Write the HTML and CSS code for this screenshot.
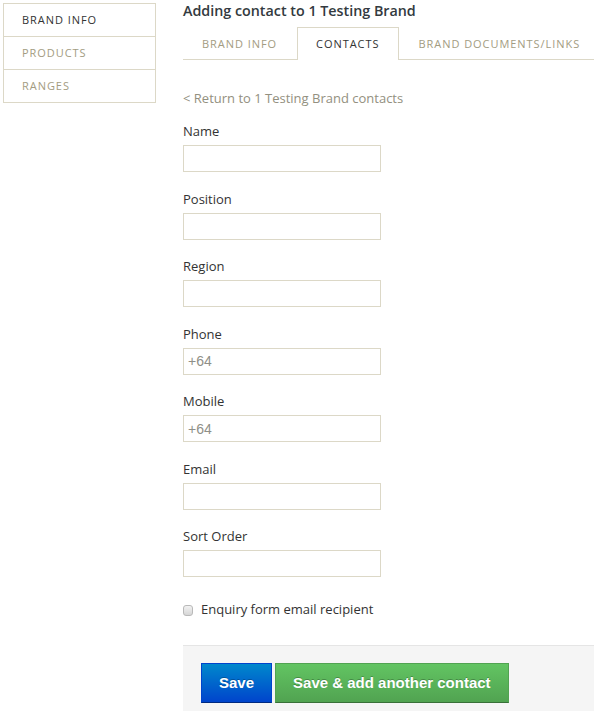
FILE: index.html
```html
<!DOCTYPE html>
<html>
<head>
<meta charset="utf-8">
<link rel="stylesheet" href="styles.css">
</head>
<body>
<div class="page">
  <nav class="sidebar">
    <a class="side-item active">BRAND INFO</a>
    <a class="side-item">PRODUCTS</a>
    <a class="side-item">RANGES</a>
  </nav>
  <main class="main">
    <h1 class="title">Adding contact to 1 Testing Brand</h1>
    <div class="tabs">
      <a class="tab">BRAND INFO</a>
      <a class="tab active">CONTACTS</a>
      <a class="tab">BRAND DOCUMENTS/LINKS</a>
    </div>
    <a class="back">&lt; Return to 1 Testing Brand contacts</a>
    <form class="form">
      <div class="group"><label class="label">Name</label><input class="field" type="text"></div>
      <div class="group"><label class="label">Position</label><input class="field" type="text"></div>
      <div class="group"><label class="label">Region</label><input class="field" type="text"></div>
      <div class="group"><label class="label">Phone</label><input class="field" type="text" value="+64"></div>
      <div class="group"><label class="label">Mobile</label><input class="field" type="text" value="+64"></div>
      <div class="group"><label class="label">Email</label><input class="field" type="text"></div>
      <div class="group"><label class="label">Sort Order</label><input class="field" type="text"></div>
      <label class="check"><input class="box" type="checkbox"><span>Enquiry form email recipient</span></label>
      <div class="actions">
        <button class="btn btn-primary" type="button">Save</button>
        <button class="btn btn-success" type="button">Save &amp; add another contact</button>
      </div>
    </form>
  </main>
</div>
</body>
</html>
```

FILE: styles.css
```css
html, body {
  margin: 0;
  padding: 0;
  background: #fff;
  overflow: hidden;
}
body {
  font-family: "Open Sans", "Liberation Sans", sans-serif;
  color: #333;
}
.page {
  display: flex;
  align-items: flex-start;
  min-height: 711px;
}
.sidebar {
  flex-shrink: 0;
  margin: 3px 0 0 3px;
  width: 151px;
  border: 1px solid #dcd8c7;
  display: flex;
  flex-direction: column;
}
.side-item {
  height: 32px;
  line-height: 32px;
  padding-left: 18px;
  font-size: 11px;
  letter-spacing: 0.95px;
  color: #a39c82;
  border-top: 1px solid #dcd8c7;
  white-space: nowrap;
}
.side-item:first-child {
  border-top: none;
}
.side-item.active {
  color: #333;
}
.main {
  margin-left: 27px;
  flex: 1;
  min-width: 0;
  display: flex;
  flex-direction: column;
  min-height: 711px;
}
.title {
  margin: 0;
  font-size: 14.3px;
  font-weight: 600;
  line-height: 22px;
  color: #333a40;
  white-space: nowrap;
}
.tabs {
  margin-top: 5px;
  display: flex;
  border-bottom: 1px solid #dcd8c7;
}
.tab {
  flex-shrink: 0;
  height: 31px;
  line-height: 31px;
  padding: 0 19px 0 18px;
  font-size: 11px;
  letter-spacing: 0.95px;
  color: #a39c82;
  border: 1px solid transparent;
  border-bottom: none;
  margin-bottom: -1px;
  background: #fff;
  white-space: nowrap;
}
.tab:last-child {
  padding-right: 0;
}
.tab.active {
  color: #333;
  border-color: #dcd8c7;
  height: 32px;
}
.back {
  margin-top: 28px;
  font-size: 13px;
  line-height: 20px;
  color: #939080;
}
.form {
  margin-top: 13px;
  display: flex;
  flex-direction: column;
  flex: 1;
}
.group {
  display: flex;
  flex-direction: column;
  margin-bottom: 16.5px;
}
.label {
  font-size: 13px;
  line-height: 20px;
  margin-bottom: 4px;
  color: #333;
}
.field {
  box-sizing: border-box;
  width: 198px;
  height: 27px;
  margin: 0;
  padding: 0 4px;
  border: 1px solid #dcd8c7;
  font-family: "Liberation Sans", Arial, sans-serif;
  font-size: 14px;
  color: #8f8f88;
  outline: none;
}
.check {
  margin-top: 5px;
  display: flex;
  align-items: center;
  font-size: 13px;
  line-height: 20px;
  color: #333;
}
.box {
  -webkit-appearance: none;
  appearance: none;
  box-sizing: border-box;
  width: 10px;
  height: 11px;
  margin: 4px 8px 0 0;
  border: 1px solid #b9b9b9;
  border-radius: 3px;
  background: linear-gradient(#f2f2f2, #d6d6d6);
}
.actions {
  margin-top: 26px;
  flex: 1;
  background: #f5f5f5;
  border-top: 1px solid #e5e5e5;
  padding: 17px 18px;
  display: flex;
  align-items: flex-start;
  gap: 3px;
}
.btn {
  box-sizing: border-box;
  height: 40px;
  padding: 0 17px;
  font-family: "Liberation Sans", Arial, sans-serif;
  font-size: 15px;
  font-weight: bold;
  color: #fff;
  text-shadow: 0 -1px 0 rgba(0,0,0,0.25);
  border: 1px solid;
  border-radius: 0;
  cursor: pointer;
}
.btn-primary {
  background: linear-gradient(#0088cc, #0044cc);
  border-color: #0044cc #0044cc #002a80;
}
.btn-success {
  background: linear-gradient(#62c462, #51a351);
  border-color: #51a351 #51a351 #387038;
}
```
